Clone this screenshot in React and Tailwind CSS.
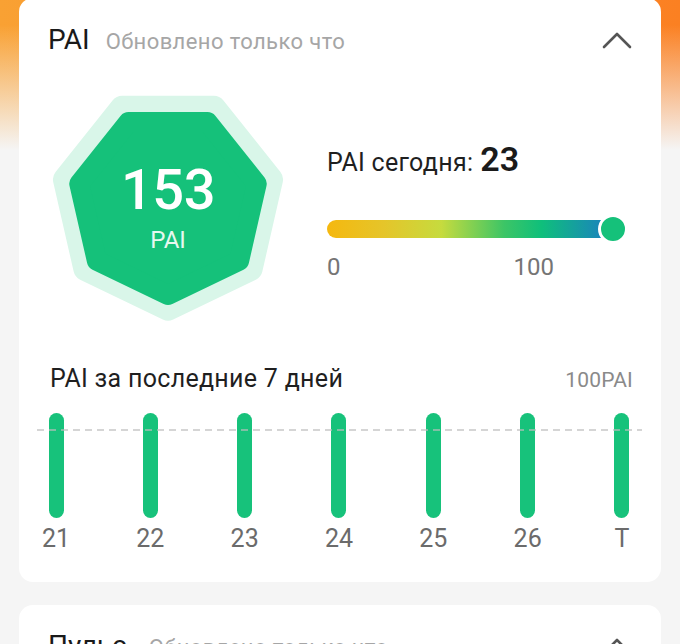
import React from "react";

function heptPoints(cx, cy, R) {
  const pts = [];
  for (let k = 0; k < 7; k++) {
    const a = ((90 + (k * 360) / 7) * Math.PI) / 180;
    pts.push(`${(cx + R * Math.cos(a)).toFixed(2)},${(cy + R * Math.sin(a)).toFixed(2)}`);
  }
  return pts.join(" ");
}

function Chevron() {
  return (
    <svg width="30" height="18" viewBox="0 0 30 18" fill="none">
      <polyline points="2,15 15,2 28,15" stroke="#555555" strokeWidth="2.6" strokeLinecap="round" strokeLinejoin="round" />
    </svg>
  );
}

const days = ["21", "22", "23", "24", "25", "26", "T"];

export default function App() {
  return (
    <div
      className="h-screen w-full overflow-hidden px-[19px] bg-[linear-gradient(180deg,rgba(245,245,245,0)_0px,rgba(245,245,245,0)_25px,#f5f5f5_150px),linear-gradient(90deg,#f9a133,#fb8022)]"
      style={{ fontFamily: "Roboto, 'Noto Sans', sans-serif" }}
    >
      <div className="-mt-[2px] rounded-[14px] bg-white pt-[27px] pb-[28px]">
        {/* header */}
        <div className="flex items-center justify-between pl-[29px] pr-[29px]">
          <div className="flex items-baseline leading-[30px]">
            <span className="text-[28px] text-[#1a1a1a]">PAI</span>
            <span className="ml-[16px] text-[22px] tracking-[0.4px] text-[#a6a6a6]">Обновлено только что</span>
          </div>
          <Chevron />
        </div>

        {/* body */}
        <div className="mt-[27px] flex pl-[29px]">
          <div className="relative h-[240px] w-[240px] shrink-0">
            <svg width="240" height="240" viewBox="0 0 240 240">
              <polygon points={heptPoints(120, 119, 105.7)} fill="#d9f6e9" stroke="#d9f6e9" strokeWidth="24" strokeLinejoin="round" />
              <polygon points={heptPoints(120, 120, 91)} fill="#15c17a" stroke="#15c17a" strokeWidth="20" strokeLinejoin="round" />
            </svg>
            <div className="absolute inset-0 flex flex-col items-center pt-[76px] text-white">
              <span className="text-[56px] font-medium leading-[60px] tracking-[-0.5px]">153</span>
              <span className="mt-[6px] text-[24px] leading-[28px] text-[#e6f8ef]">PAI</span>
            </div>
          </div>

          <div className="ml-[39px] flex w-[300px] flex-col pt-[56px]">
            <div className="flex items-baseline leading-[38px]">
              <span className="text-[25px] tracking-[0.3px] text-[#1f1f1f]">PAI сегодня:</span>
              <span className="ml-[7px] text-[34px] font-semibold text-[#1a1a1a]">23</span>
            </div>
            <div className="relative mt-[38px] h-[18px] w-[286px]">
              <div className="h-full w-full rounded-full bg-[linear-gradient(90deg,#f5b80f_0%,#e5c52a_20%,#c6db3e_40%,#3cc566_62%,#0fbf7b_75%,#1c7cc5_100%)]" />
              <div className="absolute left-[271px] top-[-6px] h-[30px] w-[30px] rounded-full border-[3px] border-white bg-[#15c17a]" />
            </div>
            <div className="mt-[15px] flex text-[24px] leading-[28px] text-[#757575]">
              <span>0</span>
              <span className="ml-[173px]">100</span>
            </div>
          </div>
        </div>

        {/* chart */}
        <div className="mt-[41px] flex items-baseline justify-between pl-[31px] pr-[28px] leading-[28px]">
          <span className="text-[25px] tracking-[0.3px] text-[#1f1f1f]">PAI за последние 7 дней</span>
          <span className="text-[21px] tracking-[0.2px] text-[#8a8a8a]">100PAI</span>
        </div>

        <div className="relative mt-[19px]">
          <div className="flex justify-between pl-[22px] pr-[24px]">
            {days.map((d) => (
              <div key={d} className="flex w-[30px] flex-col items-center">
                <div className="h-[105px] w-[15px] rounded-full bg-[#17c27b]" />
                <span className="mt-[6px] text-[25px] leading-[30px] text-[#6b6b6b]">{d}</span>
              </div>
            ))}
          </div>
          <svg className="absolute left-[18px] top-[16px]" width="605" height="2" viewBox="0 0 605 2">
            <line x1="0" y1="1" x2="605" y2="1" stroke="#bdbdbd" strokeOpacity="0.85" strokeWidth="1.6" strokeDasharray="7 5" />
          </svg>
        </div>
      </div>

      {/* second card */}
      <div className="mt-[23px] rounded-[14px] bg-white pt-[26px] pb-[40px]">
        <div className="flex items-center justify-between pl-[29px] pr-[29px]">
          <div className="flex items-baseline leading-[30px]">
            <span className="text-[28px] text-[#1a1a1a]">Пульс</span>
            <span className="ml-[22px] text-[22px] tracking-[0.4px] text-[#a6a6a6]">Обновлено только что</span>
          </div>
          <Chevron />
        </div>
        <div className="h-[200px]" />
      </div>
    </div>
  );
}
